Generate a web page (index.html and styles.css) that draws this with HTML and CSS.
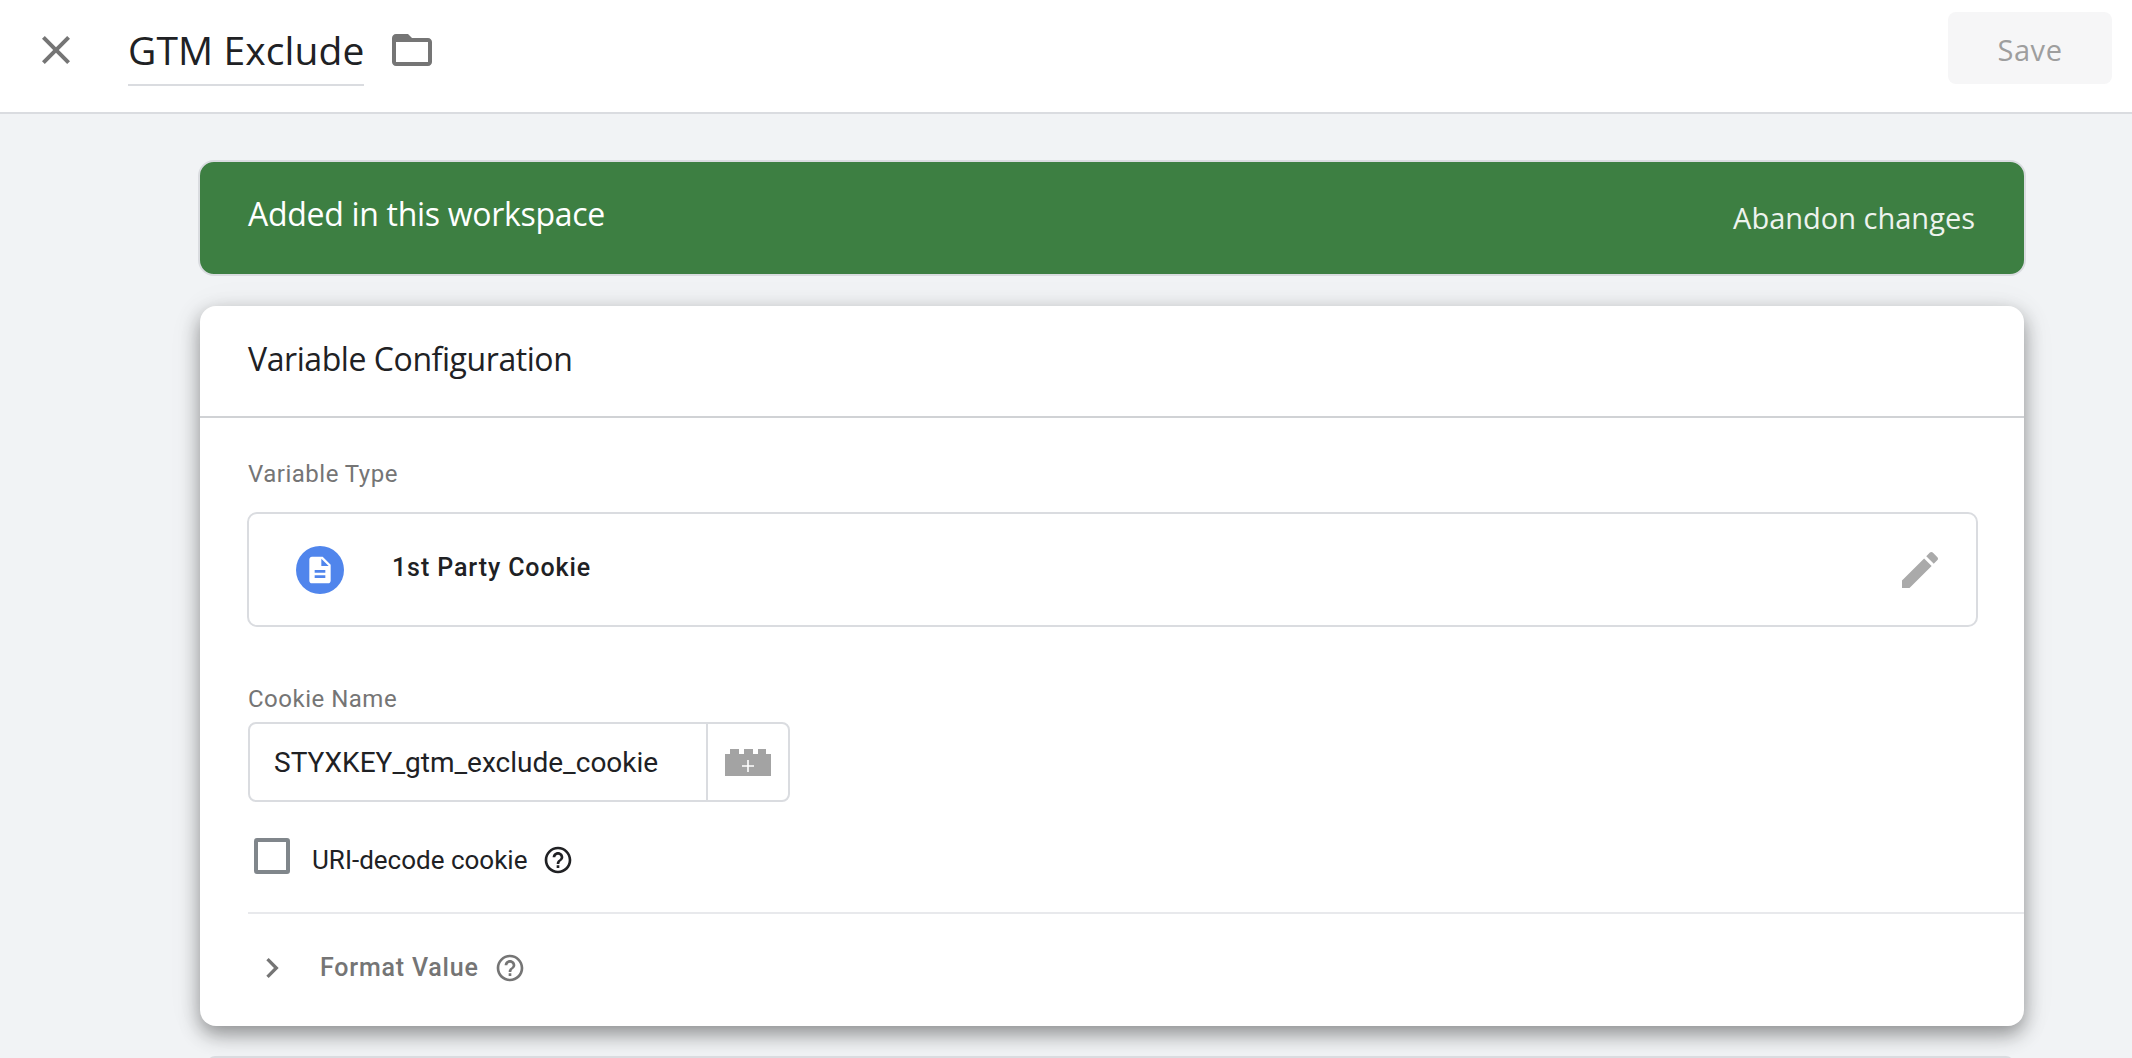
FILE: index.html
```html
<!DOCTYPE html>
<html lang="en">
<head>
<meta charset="utf-8">
<title>GTM Exclude</title>
<link rel="stylesheet" href="styles.css">
</head>
<body>
<header class="topbar">
  <button class="icon-btn close-btn" aria-label="Close">
    <svg class="icon-48 grey" viewBox="0 0 24 24"><path d="M19 6.41L17.59 5 12 10.59 6.41 5 5 6.41 10.59 12 5 17.59 6.41 19 12 13.41 17.59 19 19 17.59 13.41 12z"/></svg>
  </button>
  <div class="title">GTM Exclude</div>
  <svg class="icon-48 grey folder" viewBox="0 0 24 24"><path d="M20 6h-8l-2-2H4c-1.1 0-1.99.9-1.99 2L2 18c0 1.1.9 2 2 2h16c1.1 0 2-.9 2-2V8c0-1.1-.9-2-2-2zm0 12H4V8h16v10z"/></svg>
  <button class="save">Save</button>
</header>
<main class="page">
  <div class="banner">
    <span class="banner-text">Added in this workspace</span>
    <span class="banner-action">Abandon changes</span>
  </div>
  <section class="card">
    <div class="card-head">Variable Configuration</div>
    <div class="card-body">
      <div class="inset">
        <div class="label type-label">Variable Type</div>
        <div class="type-box">
          <span class="type-badge">
            <svg class="icon-32 white" viewBox="0 0 24 24"><path d="M14 2H6c-1.1 0-1.99.9-1.99 2L4 20c0 1.1.89 2 1.99 2H18c1.1 0 2-.9 2-2V8l-6-6zm2 16H8v-2h8v2zm0-4H8v-2h8v2zm-3-5V3.5L18.5 9H13z"/></svg>
          </span>
          <span class="type-name">1st Party Cookie</span>
          <svg class="icon-48 light edit" viewBox="0 0 24 24"><path d="M3 17.25V21h3.75L17.81 9.94l-3.75-3.75L3 17.25zM20.71 7.04c.39-.39.39-1.02 0-1.41l-2.34-2.34c-.39-.39-1.02-.39-1.41 0l-1.83 1.83 3.75 3.75 1.83-1.83z"/></svg>
        </div>
        <div class="label cookie-label">Cookie Name</div>
        <div class="input-group">
          <div class="input-value">STYXKEY_gtm_exclude_cookie</div>
          <div class="input-addon">
            <svg class="brick" viewBox="0 0 46 27"><path fill-rule="evenodd" d="M0 5h5V0h9v5h5V0h9v5h5V0h8v5h5v22H0zM22.200 11v5.200H17v1.600h5.200V23h1.600v-5.200H29v-1.600h-5.200V11z"/></svg>
          </div>
        </div>
        <div class="check-row">
          <span class="checkbox"></span>
          <span class="check-label">URI-decode cookie</span>
          <svg class="icon-32 dark" viewBox="0 0 24 24"><path d="M11 18h2v-2h-2v2zm1-16C6.48 2 2 6.48 2 12s4.48 10 10 10 10-4.48 10-10S17.52 2 12 2zm0 18c-4.410 0-8-3.590-8-8s3.590-8 8-8 8 3.590 8 8-3.590 8-8 8zm0-14c-2.210 0-4 1.790-4 4h2c0-1.100.9-2 2-2s2 .9 2 2c0 2-3 1.750-3 5h2c0-2.250 3-2.500 3-5 0-2.210-1.790-4-4-4z"/></svg>
        </div>
      </div>
      <div class="format-row">
        <svg class="icon-40 grey" viewBox="0 0 24 24"><path d="M10 6L8.590 7.410 13.170 12l-4.580 4.590L10 18l6-6z"/></svg>
        <span class="format-label">Format Value</span>
        <svg class="icon-32 grey" viewBox="0 0 24 24"><path d="M11 18h2v-2h-2v2zm1-16C6.48 2 2 6.48 2 12s4.48 10 10 10 10-4.48 10-10S17.52 2 12 2zm0 18c-4.410 0-8-3.590-8-8s3.590-8 8-8 8 3.590 8 8-3.590 8-8 8zm0-14c-2.210 0-4 1.790-4 4h2c0-1.100.9-2 2-2s2 .9 2 2c0 2-3 1.750-3 5h2c0-2.250 3-2.500 3-5 0-2.210-1.790-4-4-4z"/></svg>
      </div>
    </div>
  </section>
  <div class="next-card"></div>
</main>
</body>
</html>
```

FILE: styles.css
```css
* { box-sizing: border-box; }
html, body { height: 100%; margin: 0; overflow: hidden; }
body { background: #f1f3f5; font-family: Roboto, "Liberation Sans", sans-serif; color: #202124; }
svg { display: block; flex: none; fill: currentColor; }
.icon-48 { width: 48px; height: 48px; }
.icon-40 { width: 40px; height: 40px; }
.icon-32 { width: 32px; height: 32px; }
.grey { color: #757575; }
.light { color: #aaaaaa; }
.white { color: #fff; }
.dark { color: #202124; }

.topbar { height: 114px; background: #fff; border-bottom: 2px solid #dadce0; display: flex; align-items: flex-start; padding: 12px 20px 0 32px; }
.icon-btn { border: 0; background: none; padding: 0; color: inherit; margin-top: 14px; }
.close-btn { margin-right: 48px; }
.title { font-family: "Open Sans", Roboto, sans-serif; font-size: 39px; line-height: 50px; height: 74px; padding-top: 13px; border-bottom: 2px solid #dadce0; width: 236px; white-space: nowrap; letter-spacing: .1px; }
.folder { margin: 14px 0 0 24px; }
.save { margin-left: auto; width: 164px; height: 72px; border: 0; border-radius: 8px; background: #f6f6f7; color: #9e9e9e; font-family: "Open Sans", Roboto, sans-serif; font-size: 29px; font-weight: 500; letter-spacing: .6px; padding-top: 4px; }

.page { padding: 46px 108px 0 200px; }
.banner { height: 116px; margin: 0 -2px; background: #3d7f42; border: 2px solid #dadce0; border-radius: 16px; display: flex; justify-content: space-between; padding: 0 49px 0 48px; color: #fff; }
.banner-text { font-family: "Open Sans", Roboto, sans-serif; font-size: 32px; line-height: 104px; letter-spacing: -.3px; }
.banner-action { font-family: "Open Sans", Roboto, sans-serif; font-size: 29px; font-weight: 500; line-height: 112px; color: #eef3ee; }

.card { margin-top: 30px; height: 720px; background: #fff; border-radius: 16px; box-shadow: 0 8px 20px rgba(0,0,0,.4), 0 4px 40px rgba(0,0,0,.05); }
.card-head { height: 112px; border-bottom: 2px solid #d0d2d5; padding: 0 48px; font-family: "Open Sans", Roboto, sans-serif; font-size: 32px; line-height: 106px; letter-spacing: -.43px; }
.card-body { padding-left: 48px; }
.inset { padding-right: 46px; height: 496px; border-bottom: 2px solid #e8e9ec; }
.label { color: #757575; font-size: 24px; letter-spacing: .5px; line-height: 30px; }
.type-label { padding-top: 41px; height: 94px; line-height: 30px; }
.type-box { height: 115px; margin-left: -1px; border: 2px solid #dadce0; border-radius: 10px; display: flex; align-items: center; padding: 0 32px 0 47px; }
.type-badge { width: 48px; height: 48px; border-radius: 50%; background: #5085ec; display: flex; align-items: center; justify-content: center; }
.type-name { margin-left: 48px; font-size: 25px; font-weight: 500; letter-spacing: .9px; margin-top: -4px; }
.edit { margin-left: auto; }
.cookie-label { margin-top: 57px; height: 38px; }
.input-group { width: 542px; height: 80px; border: 2px solid #dadce0; border-radius: 8px; display: flex; }
.input-value { flex: 1; padding-left: 24px; font-size: 28px; line-height: 78px; white-space: nowrap; }
.input-addon { width: 82px; border-left: 2px solid #dadce0; display: flex; align-items: center; justify-content: center; color: #a3a3a3; }
.brick { width: 46px; height: 27px; }
.check-row { display: flex; align-items: center; margin-top: 34px; }
.checkbox { width: 36px; height: 36px; margin-left: 6px; border: 4px solid #80868b; border-radius: 3px; }
.check-label { margin-left: 22px; font-size: 26px; margin-top: 8px; }
.check-row .icon-32 { margin-left: 15px; margin-top: 8px; }
.format-row { display: flex; align-items: center; height: 107px; padding-left: 4px; color: #757575; }
.format-label { margin-left: 28px; font-size: 25px; font-weight: 500; letter-spacing: .8px; }
.format-row .icon-32 { margin-left: 15px; }
.next-card { height: 40px; margin: 30px 10px 0 7px; border-top: 2px solid #dadce0; border-radius: 8px 8px 0 0; }
```
